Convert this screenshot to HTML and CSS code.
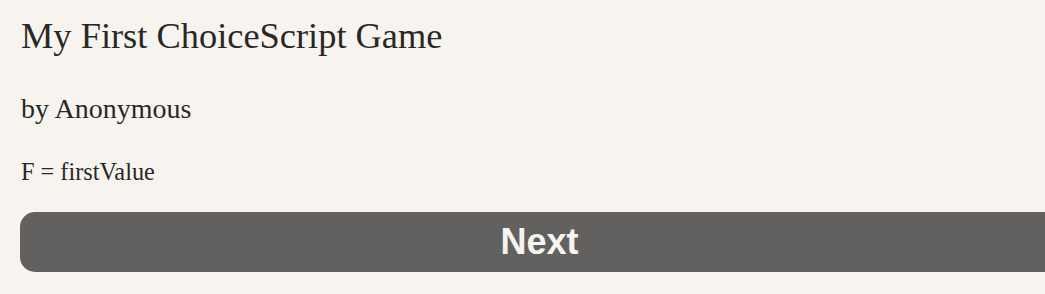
FILE: index.html
```html
<!DOCTYPE html>
<html>
<head>
<meta charset="utf-8">
<link rel="stylesheet" href="styles.css">
</head>
<body>
<main class="page">
  <h1 class="title">My First ChoiceScript Game</h1>
  <h2 class="author">by Anonymous</h2>
  <p class="stat">F = firstValue</p>
  <button class="next">Next</button>
</main>
</body>
</html>
```
FILE: styles.css
```css
html, body {
  margin: 0;
  padding: 0;
  background: #f7f4f0;
  overflow: hidden;
}
.page {
  display: flex;
  flex-direction: column;
  align-items: flex-start;
  padding: 15px 0 0 21px;
  font-family: "Liberation Serif", "Times New Roman", serif;
  color: #2a2826;
}
.title {
  margin: 0;
  font-size: 36.4px;
  font-weight: normal;
  line-height: 43px;
}
.author {
  margin: 34px 0 0;
  font-size: 28px;
  font-weight: normal;
  line-height: 34px;
}
.stat {
  margin: 31px 0 0;
  font-size: 24.3px;
  line-height: 29px;
}
.next {
  margin: 26px 0 0 -1px;
  width: 1039px;
  height: 60px;
  flex-shrink: 0;
  border: none;
  border-radius: 15px;
  background: #63615f;
  color: #f7f4f0;
  font-family: "Liberation Sans", Arial, sans-serif;
  font-weight: bold;
  font-size: 36px;
  line-height: 60px;
  padding: 0;
  text-align: center;
}
```
